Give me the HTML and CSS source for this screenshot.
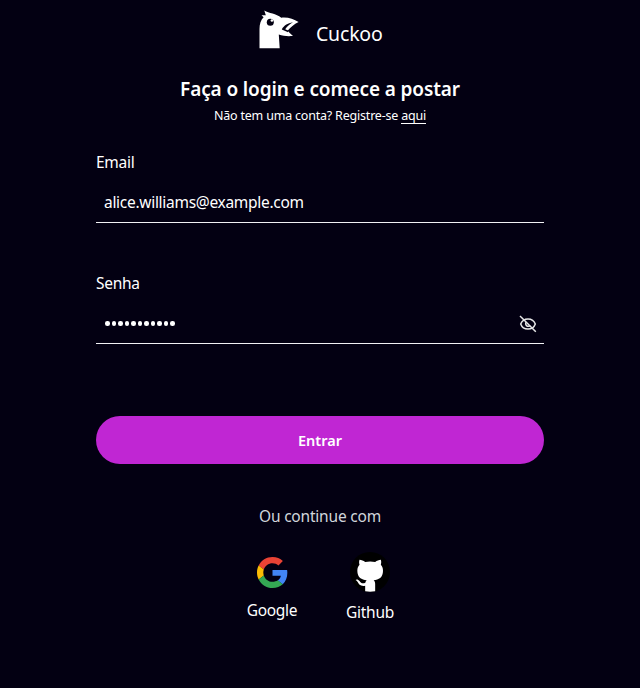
FILE: index.html
```html
<!DOCTYPE html>
<html lang="pt-BR">
<head>
<meta charset="utf-8">
<title>Cuckoo</title>
<link rel="stylesheet" href="styles.css">
</head>
<body>
<main class="page">
  <header class="brand">
    <svg class="bird" viewBox="0 0 40 40" fill="#fff"><path d="M.5 38.300V19C.5 14 1.800 10 4.600 7.200L2.500 5.300 6.800 5.300 5.300.5C10 3.500 17 3.300 22.300 7.700C29 7 34.500 9 39.600 12C35 14 31.500 17.500 28.600 20.800C30 22.500 31.800 24.300 34 26C29.500 26.300 24.500 26.300 19.800 24.600L20.700 38.300Z"/><path fill="#030012" d="M34 12.300C28.500 13.200 24.500 16 22.800 19.400L29 22.200 29.200 20.500 26.200 19.300C28 16.500 30.500 14.200 34 12.300Z"/><circle cx="11.300" cy="12.300" r="3.500" fill="#030012"/><circle cx="12.900" cy="10.500" r="1.300"/></svg>
    <span class="brand-name">Cuckoo</span>
  </header>
  <h1 class="title"><span>Faça o login e comece a postar</span></h1>
  <p class="register"><span>Não tem uma conta? Registre-se <a class="link">aqui</a></span></p>
  <form class="form">
    <div class="field">
      <label class="label">Email</label>
      <div class="control"><span class="value">alice.williams@example.com</span></div>
    </div>
    <div class="field">
      <label class="label">Senha</label>
      <div class="control">
        <span class="dots"><i></i><i></i><i></i><i></i><i></i><i></i><i></i><i></i><i></i><i></i><i></i></span>
        <svg class="eye" viewBox="0 0 18 18" fill="none" stroke="#e6e6e6" stroke-width="1.500"><path d="M1.700 9C3 5.300 6 3.900 9 3.900S15 5.300 16.300 9C15 12.700 12 14.100 9 14.100S3 12.700 1.700 9Z"/><path d="M7.400 6.900A2.600 2.600 0 1 0 11.200 10.500"/><path d="M1 1 16.800 16.800"/></svg>
      </div>
    </div>
    <button class="submit" type="button"><span>Entrar</span></button>
  </form>
  <p class="alternative"><span>Ou continue com</span></p>
  <div class="providers">
    <div class="provider google">
      <svg class="google-icon" viewBox="0 0 48 48"><path fill="#EA4335" d="M24 9.500c3.540 0 6.710 1.220 9.210 3.600l6.850-6.850C35.900 2.380 30.470 0 24 0 14.620 0 6.510 5.380 2.560 13.220l7.980 6.190C12.430 13.720 17.740 9.500 24 9.500z"/><path fill="#4285F4" d="M46.980 24.550c0-1.570-.15-3.090-.38-4.550H24v9.020h12.940c-.58 2.960-2.260 5.480-4.780 7.180l7.730 6c4.510-4.180 7.090-10.360 7.090-17.650z"/><path fill="#FBBC05" d="M10.530 28.590c-.48-1.450-.76-2.990-.76-4.590s.27-3.140.76-4.590l-7.980-6.190C.92 16.460 0 20.120 0 24s.92 7.540 2.560 10.780l7.970-6.190z"/><path fill="#34A853" d="M24 48c6.480 0 11.930-2.130 15.890-5.810l-7.730-6c-2.150 1.450-4.920 2.300-8.160 2.300-6.260 0-11.570-4.220-13.470-9.910l-7.980 6.190C6.510 42.620 14.620 48 24 48z"/></svg>
      <span class="provider-name">Google</span>
    </div>
    <div class="provider github">
      <svg class="github-icon" viewBox="0 0 24 24"><circle cx="12" cy="12" r="12"/><path fill="#fff" d="M9.100 23.600V20.300C6.200 20.800 5.300 19.400 4.700 18.200C4.300 17.400 3.800 17.100 3.400 16.800C3.800 16.100 5.100 16.500 5.700 17.400C6.600 18.900 7.700 19.100 9.200 18.500C9.300 17.700 9.700 17.200 10 16.900C7 16.600 4.400 15.300 4.400 11.200C4.400 9.700 4.900 8.600 5.700 7.700C5.500 7 5.300 5.900 5.700 4.700C6.900 4.700 8 5.300 9.100 6C11 5.500 13.200 5.500 15.100 6C16.200 5.300 17.300 4.700 18.500 4.700C18.900 5.900 18.700 7 18.500 7.700C19.300 8.600 19.800 9.700 19.800 11.200C19.800 15.300 17.200 16.600 14.200 16.900C14.800 17.400 15.100 18.200 15.100 19.200V23.600C13 24 11.100 24 9.100 23.600Z"/></svg>
      <span class="provider-name">Github</span>
    </div>
  </div>
</main>
</body>
</html>
```
FILE: styles.css
```css
* { box-sizing: border-box; }
body { margin: 0; background: #030012; color: #fff; font: 15.500px/24px "Noto Sans", "Open Sans", sans-serif; letter-spacing: -.290px; }
.page { width: 448px; height: 688px; margin: 0 auto; padding-top: 10px; white-space: nowrap; }
h1, p { margin: 0; text-align: center; }
.brand { display: flex; gap: 17px; height: 48px; padding-left: 163px; align-items: center; }
.bird { width: 40px; height: 40px; align-self: flex-start; }
.brand-name { font-size: 19.500px; letter-spacing: -.2px; }
.title { margin-top: 17px; font-size: 19px; line-height: 28px; font-weight: 600; letter-spacing: -.120px; }
.register { font-size: 12.500px; line-height: 20px; margin-top: 3px; letter-spacing: -.2px; }
.link { box-shadow: 0 -1px 0 #fff inset; }
.form { margin-top: 24px; }
.field { height: 121px; }
.label { display: block; height: 24px; }
.control { display: flex; align-items: center; height: 49px; border-bottom: 1px solid #f1f1f4; padding: 8px 7px 0 8px; }
.dots { display: flex; gap: 2px; padding: 1px 0 0 1px; }
.dots i { width: 4.500px; height: 4.500px; border-radius: 50%; background: #fff; }
.eye { width: 18px; height: 18px; margin: 2px 0 0 auto; }
.submit { display: block; width: 448px; height: 48px; margin-top: 24px; border: 0; border-radius: 24px; background: #c026d3; color: #fff; font: 600 14.500px/24px "Noto Sans", sans-serif; }
.link { text-decoration: none; }
.alternative { margin-top: 40px; color: #d1d5db; letter-spacing: -.2px; }
.providers { display: flex; justify-content: center; gap: 48px; margin-top: 24px; }
.provider { display: flex; flex-direction: column; align-items: center; }
.google { width: 52px; padding-top: 5px; gap: 10px; }
.github { width: 48px; gap: 8px; }
.google-icon { width: 31px; height: 31px; }
.github-icon { width: 40px; height: 40px; }
```
